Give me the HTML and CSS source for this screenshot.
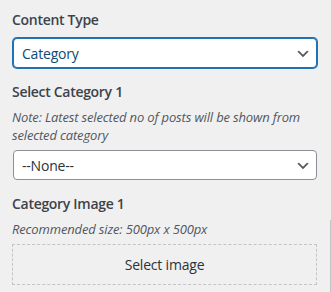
FILE: index.html
```html
<!DOCTYPE html>
<html lang="en">
<head>
    <meta charset="UTF-8">
    <meta name="viewport" content="width=device-width, initial-scale=1.0">
    <title>Customizer - Category Section</title>
    <link rel="stylesheet" href="styles.css">
</head>
<body>
    <div class="controls">
        <div class="control">
            <label class="control-title" for="contentType">Content Type</label>
            <select id="contentType" class="control-select is-active">
                <option>Category</option>
                <option>Page</option>
            </select>
        </div>

        <div class="control">
            <label class="control-title" for="category1">Select Category 1</label>
            <p class="control-description">Note: Latest selected no of posts will be shown from selected category</p>
            <select id="category1" class="control-select">
                <option>--None--</option>
            </select>
        </div>

        <div class="control">
            <span class="control-title">Category Image 1</span>
            <p class="control-description">Recommended size: 500px x 500px</p>
            <button type="button" class="upload-btn">Select image</button>
        </div>
    </div>

    <div class="scroll-track"></div>
</body>
</html>
```

FILE: styles.css
```css
body {
    font-family: "Open Sans", "Noto Sans", sans-serif;
    background: #f0f0f1;
    color: #2c3338;
    margin: 0;
    padding: 10px 14px 0 12px;
    min-height: 100vh;
    box-sizing: border-box;
}

.controls {
    display: flex;
    flex-direction: column;
    gap: 14px;
}

.control {
    display: flex;
    flex-direction: column;
}

.control-title {
    display: block;
    font-size: 14px;
    line-height: 20px;
    font-weight: 600;
    letter-spacing: -0.3px;
    color: #3c434a;
    margin-bottom: 8px;
}

.control-description {
    margin: -2px 0 6px 0;
    font-size: 13px;
    line-height: 18px;
    font-style: italic;
    letter-spacing: -0.15px;
    color: #50575e;
}

.control-select {
    -webkit-appearance: none;
    appearance: none;
    box-sizing: border-box;
    width: 304px;
    height: 30px;
    margin: 0 0 0 1px;
    padding: 0 24px 0 8px;
    font-family: inherit;
    font-size: 14px;
    letter-spacing: -0.2px;
    color: #2c3338;
    border: 1px solid #8c8f94;
    border-radius: 4px;
    background: #fff url("data:image/svg+xml;charset=US-ASCII,%3Csvg%20width%3D%2220%22%20height%3D%2220%22%20xmlns%3D%22http%3A%2F%2Fwww.w3.org%2F2000%2Fsvg%22%3E%3Cpath%20d%3D%22M5%206l5%205%205-5%202%201-7%207-7-7%202-1z%22%20fill%3D%22%23555%22%2F%3E%3C%2Fsvg%3E") no-repeat right 5px top 55%;
    background-size: 16px 16px;
    outline: none;
}

.control-select.is-active {
    border-color: #2271b1;
    box-shadow: 0 0 0 1px #2271b1;
    color: #0a4b78;
}

.upload-btn {
    box-sizing: border-box;
    width: 100%;
    height: 41px;
    padding: 0;
    font-family: inherit;
    font-size: 14px;
    letter-spacing: -0.2px;
    color: #2c3338;
    background: transparent;
    border: 1px dashed #c3c4c7;
    border-radius: 0;
    cursor: pointer;
}

.scroll-track {
    position: absolute;
    top: 220px;
    right: 0;
    bottom: 0;
    width: 1px;
    background: #c3c4c7;
}
```
